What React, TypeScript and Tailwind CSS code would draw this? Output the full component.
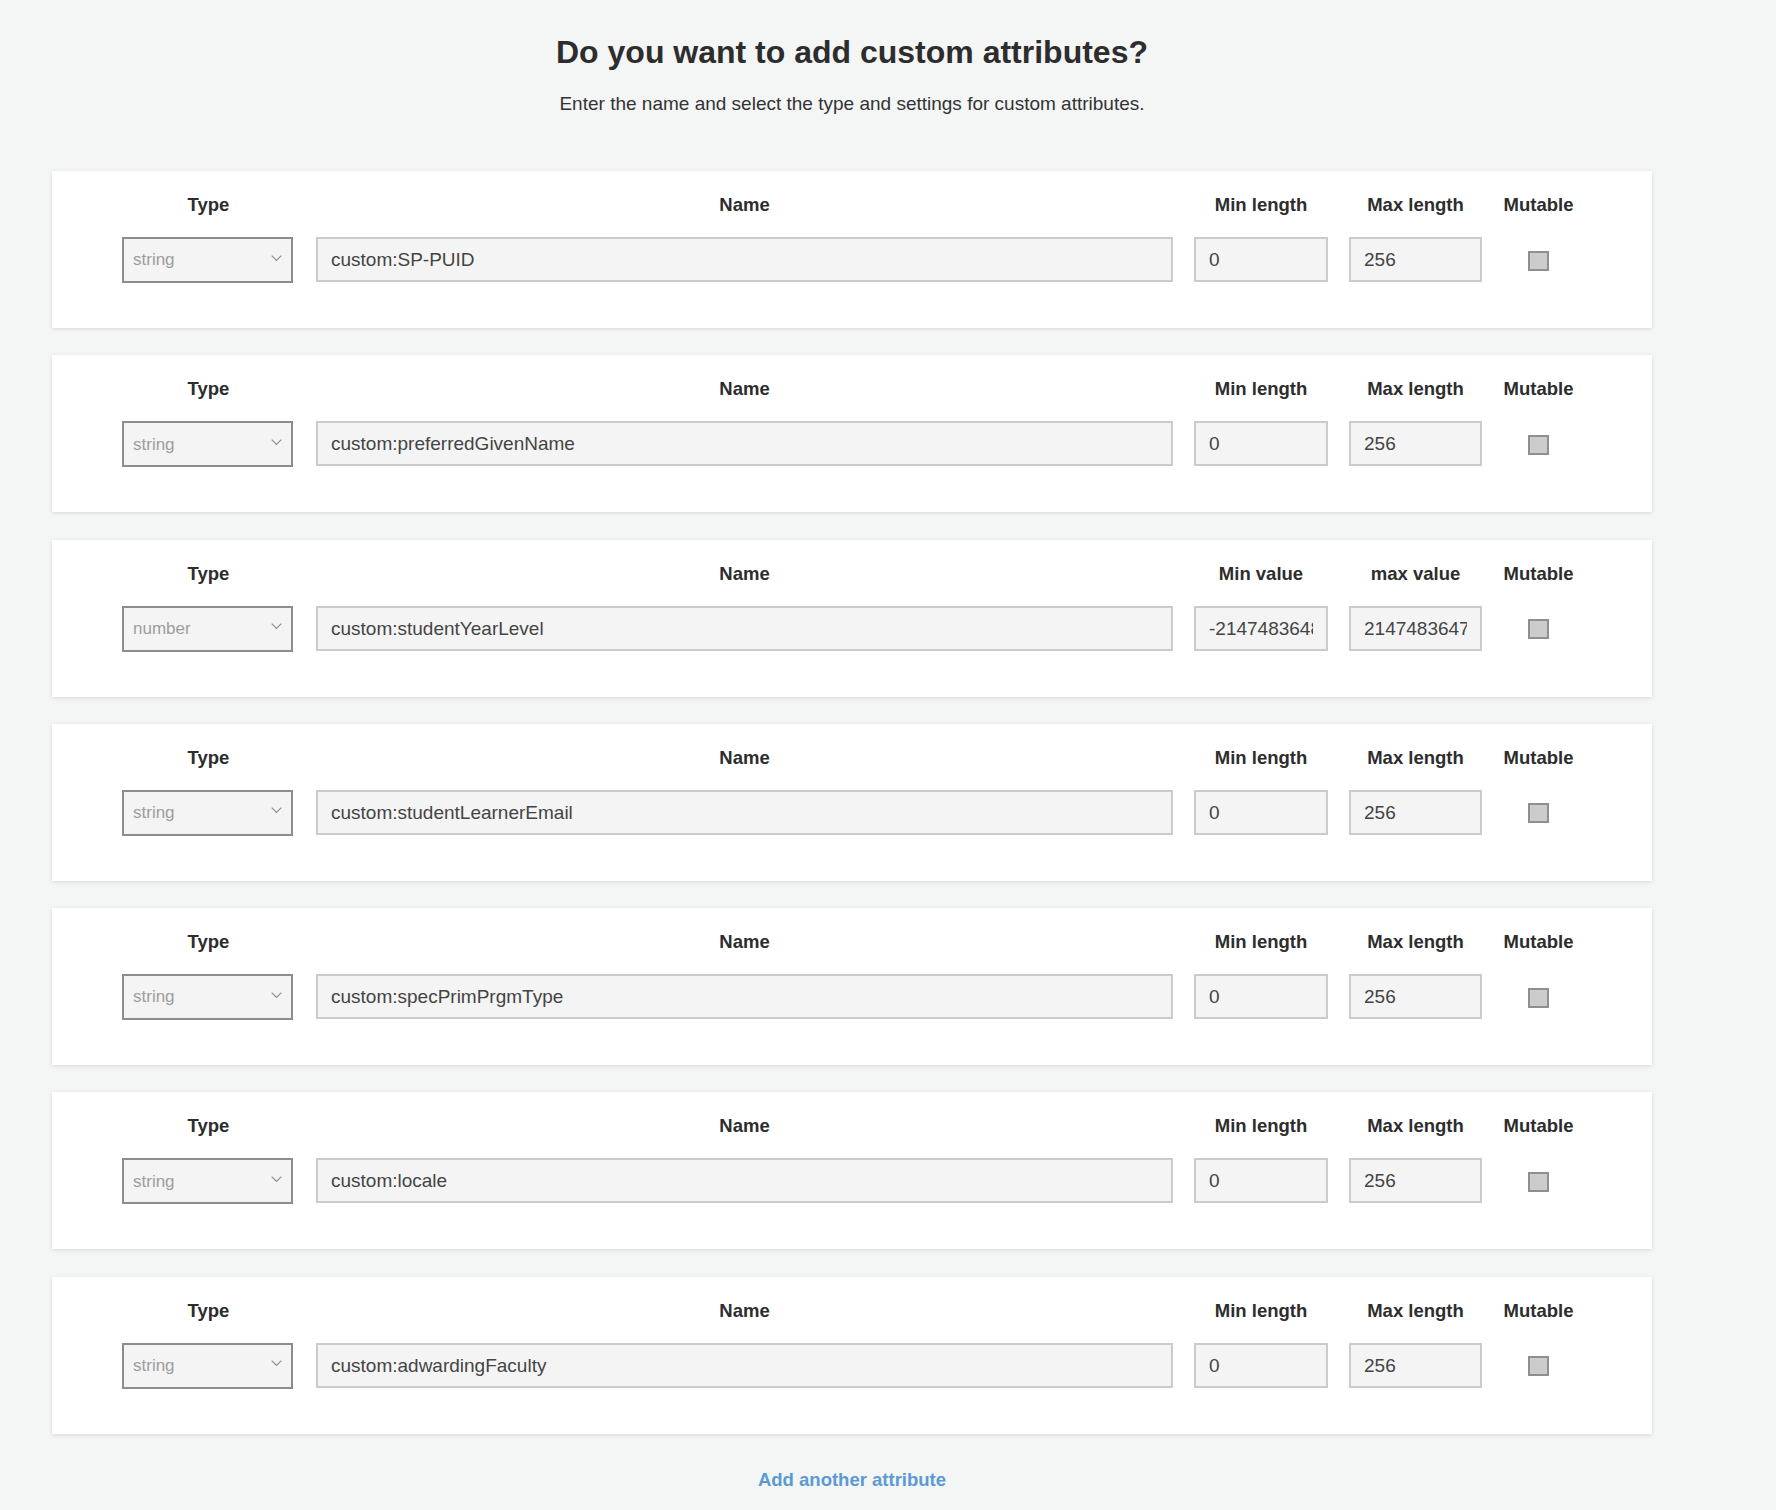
import React from "react";

type Row = {
  type: string;
  name: string;
  minLabel: string;
  maxLabel: string;
  min: string;
  max: string;
};

const rows: Row[] = [
  { type: "string", name: "custom:SP-PUID", minLabel: "Min length", maxLabel: "Max length", min: "0", max: "256" },
  { type: "string", name: "custom:preferredGivenName", minLabel: "Min length", maxLabel: "Max length", min: "0", max: "256" },
  { type: "number", name: "custom:studentYearLevel", minLabel: "Min value", maxLabel: "max value", min: "-2147483648", max: "2147483647" },
  { type: "string", name: "custom:studentLearnerEmail", minLabel: "Min length", maxLabel: "Max length", min: "0", max: "256" },
  { type: "string", name: "custom:specPrimPrgmType", minLabel: "Min length", maxLabel: "Max length", min: "0", max: "256" },
  { type: "string", name: "custom:locale", minLabel: "Min length", maxLabel: "Max length", min: "0", max: "256" },
  { type: "string", name: "custom:adwardingFaculty", minLabel: "Min length", maxLabel: "Max length", min: "0", max: "256" },
];

function Header({ children }: { children: React.ReactNode }) {
  return (
    <div className="h-[22px] text-center text-[18.5px] leading-[22px] font-bold text-[#2d2d2d] whitespace-nowrap">
      {children}
    </div>
  );
}

function TextBox({ value }: { value: string }) {
  return (
    <input
      readOnly
      value={value}
      className="w-full h-[45px] border-2 border-[#cbcbcb] bg-[#f4f4f4] px-[13px] pt-[1px] text-[19px] text-[#444] outline-none font-['Liberation_Sans',Arial,sans-serif]"
    />
  );
}

function AttributeCard({ row }: { row: Row }) {
  return (
    <div className="bg-white h-[157px] shadow-[0_1px_4px_rgba(0,0,0,0.13)] pt-[23px] pl-[70px]">
      <div className="grid grid-cols-[173px_857px_134px_133px_71px] grid-rows-[22px_45px] gap-x-[21px] gap-y-[21px]">
        <Header>Type</Header>
        <Header>Name</Header>
        <Header>{row.minLabel}</Header>
        <Header>{row.maxLabel}</Header>
        <Header>Mutable</Header>

        <div className="w-[171px] h-[46px] border-2 border-[#8b8d8f] bg-[#f4f4f4] flex items-center justify-between pl-[9px] pr-[9px]">
          <span className="text-[17px] text-[#9d9d9d] font-light">{row.type}</span>
          <svg width="11" height="7" viewBox="0 0 11 7" className="mb-[4px]">
            <path d="M0.7 0.7 L5.5 5.5 L10.3 0.7" fill="none" stroke="#8f8f8f" strokeWidth="1.2" />
          </svg>
        </div>
        <TextBox value={row.name} />
        <TextBox value={row.min} />
        <TextBox value={row.max} />
        <div className="flex items-center justify-center">
          <div className="w-[21px] h-[20px] border-2 border-[#8d8f91] bg-[#cccccc] ml-[-1px] mt-[2px]" />
        </div>
      </div>
    </div>
  );
}

export default function App() {
  return (
    <div className="min-h-[1510px] bg-[#f4f5f5] font-['Liberation_Sans',Arial,sans-serif]">
      <div className="ml-[52px] w-[1600px] pt-[34px] pb-[30px]">
        <h1 className="text-center text-[32px] leading-[36px] font-bold text-[#2d2d2d]">
          Do you want to add custom attributes?
        </h1>
        <p className="mt-[23px] text-center text-[19px] leading-[22px] text-[#333]">
          Enter the name and select the type and settings for custom attributes.
        </p>
        <div className="mt-[56px] flex flex-col gap-[27.25px]">
          {rows.map((r, i) => (
            <AttributeCard key={i} row={r} />
          ))}
        </div>
        <div className="mt-[35px] text-center">
          <a className="text-[18.5px] leading-[22px] font-bold text-[#5a9bd5] cursor-pointer">
            Add another attribute
          </a>
        </div>
      </div>
    </div>
  );
}
